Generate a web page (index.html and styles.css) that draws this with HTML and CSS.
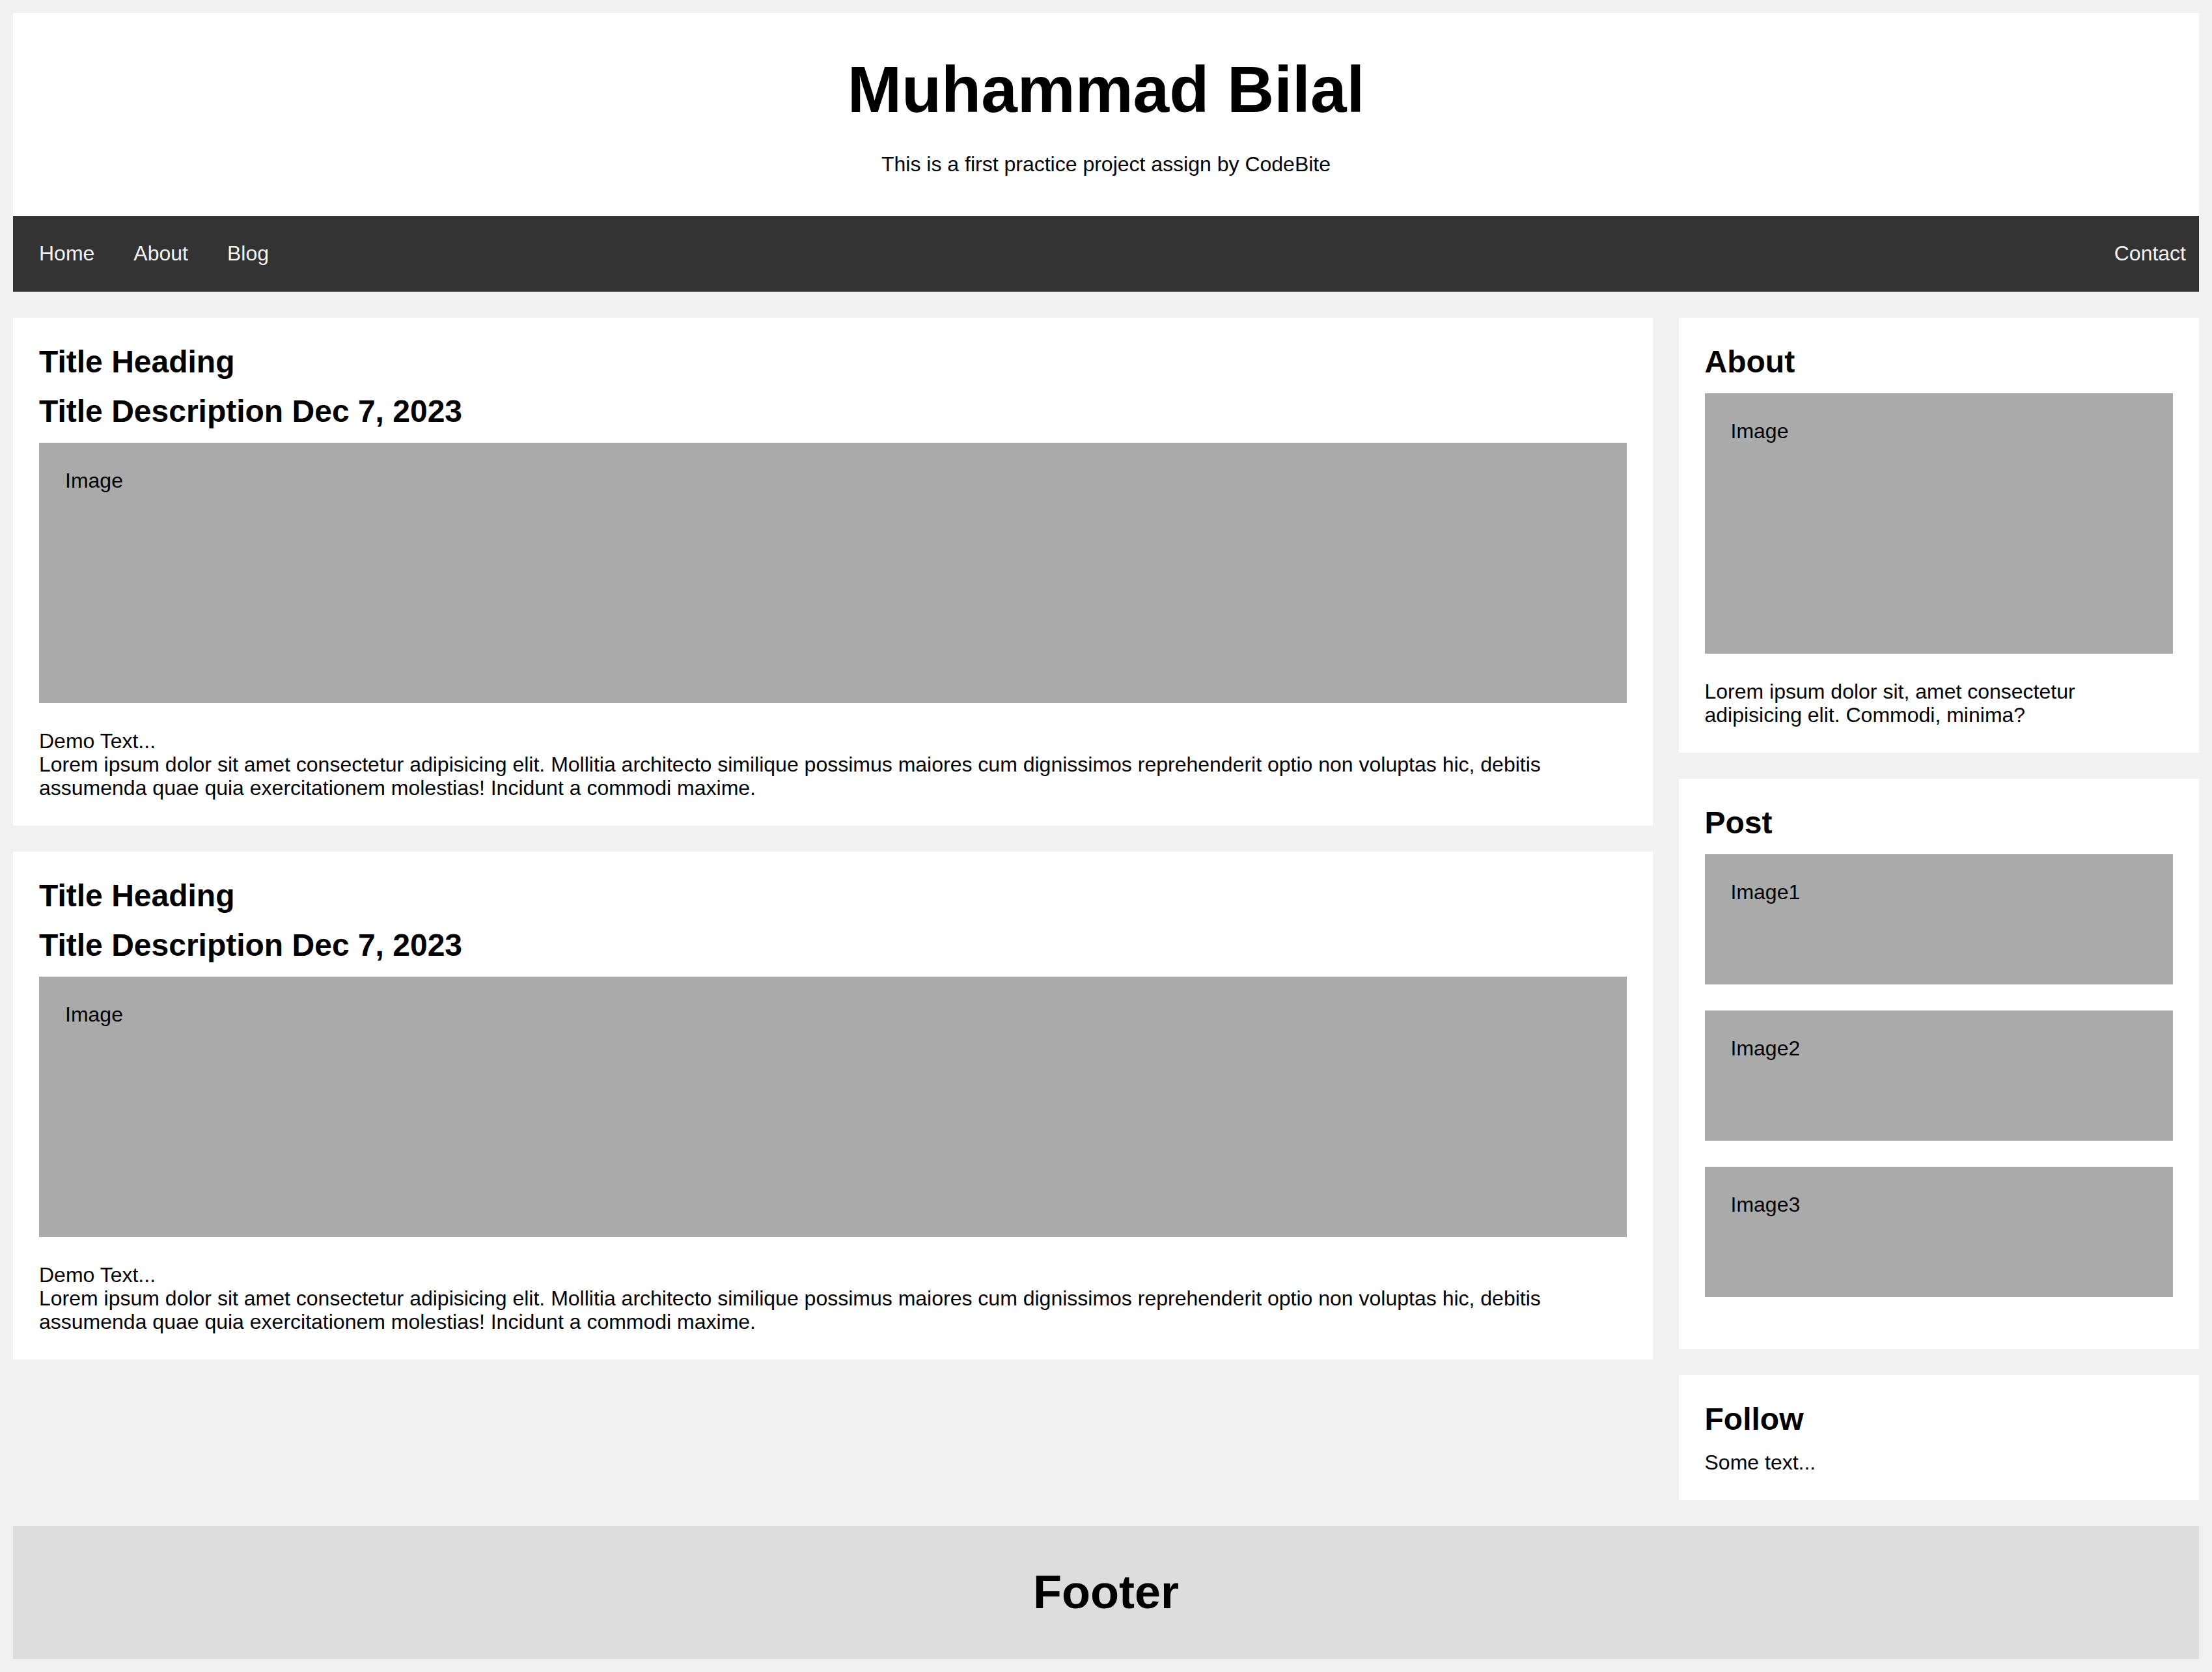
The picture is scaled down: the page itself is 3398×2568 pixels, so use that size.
FILE: index.html
```html
<!DOCTYPE html>
<html lang="en">
<head>
<meta charset="utf-8">
<title>Muhammad Bilal</title>
<link rel="stylesheet" href="styles.css">
</head>
<body>
  <header class="header">
    <h1 class="site-title">Muhammad Bilal</h1>
    <p class="site-sub">This is a first practice project assign by CodeBite</p>
  </header>

  <nav class="topnav">
    <a href="#">Home</a>
    <a href="#">About</a>
    <a href="#">Blog</a>
    <a href="#" class="nav-right">Contact</a>
  </nav>

  <div class="row">
    <main class="leftcolumn">
      <section class="card">
        <h2 class="card-title">Title Heading</h2>
        <h2 class="card-title">Title Description Dec 7, 2023</h2>
        <div class="fakeimg tall">Image</div>
        <p class="text">Demo Text...<br>Lorem ipsum dolor sit amet consectetur adipisicing elit. Mollitia architecto similique possimus maiores cum dignissimos reprehenderit optio non voluptas hic, debitis assumenda quae quia exercitationem molestias! Incidunt a commodi maxime.</p>
      </section>
      <section class="card">
        <h2 class="card-title">Title Heading</h2>
        <h2 class="card-title">Title Description Dec 7, 2023</h2>
        <div class="fakeimg tall">Image</div>
        <p class="text">Demo Text...<br>Lorem ipsum dolor sit amet consectetur adipisicing elit. Mollitia architecto similique possimus maiores cum dignissimos reprehenderit optio non voluptas hic, debitis assumenda quae quia exercitationem molestias! Incidunt a commodi maxime.</p>
      </section>
    </main>

    <aside class="rightcolumn">
      <section class="card">
        <h2 class="card-title">About</h2>
        <div class="fakeimg tall">Image</div>
        <p class="text">Lorem ipsum dolor sit, amet consectetur adipisicing elit. Commodi, minima?</p>
      </section>
      <section class="card">
        <h2 class="card-title">Post</h2>
        <div class="fakeimg short">Image1</div>
        <div class="fakeimg short">Image2</div>
        <div class="fakeimg short">Image3</div>
      </section>
      <section class="card">
        <h2 class="card-title">Follow</h2>
        <p class="text">Some text...</p>
      </section>
    </aside>
  </div>

  <footer class="footer">
    <h2 class="footer-title">Footer</h2>
  </footer>
</body>
</html>
```

FILE: styles.css
```css
* {
  box-sizing: border-box;
}

html, body {
  background: #f1f1f1;
}

body {
  margin: 20px;
  font-family: "Liberation Sans", Arial, sans-serif;
  font-size: 32px;
  line-height: 36px;
  color: #000;
}

.header {
  background: #fff;
  text-align: center;
  padding: 60px 40px 62px;
}

.site-title {
  margin: 0;
  font-size: 100px;
  line-height: 115px;
  font-weight: bold;
}

.site-sub {
  margin: 39px 0 0;
  font-size: 32px;
  line-height: 36px;
}

.topnav {
  background: #333;
  display: flex;
  padding-left: 10px;
}

.topnav a {
  color: #f2f2f2;
  text-decoration: none;
  font-size: 32px;
  line-height: 36px;
  padding: 39px 30px 41px;
}

.topnav .nav-right {
  margin-left: auto;
  padding-right: 20px;
}

.row {
  display: flex;
  align-items: flex-start;
}

.leftcolumn {
  flex: 0 0 75%;
  width: 75%;
}

.rightcolumn {
  flex: 0 0 25%;
  width: 25%;
  padding-left: 40px;
}

.card {
  background: #fff;
  padding: 40px;
  margin-top: 40px;
}

.card-title {
  margin: 0 0 21px;
  font-size: 48px;
  line-height: 55px;
  font-weight: bold;
}

.fakeimg {
  background: #aaa;
  width: 100%;
  padding: 40px;
  margin-bottom: 40px;
}

.fakeimg.tall {
  height: 400px;
}

.fakeimg.short {
  height: 200px;
}

.text {
  margin: 0;
}

.footer {
  background: #ddd;
  text-align: center;
  padding: 60px 40px 61px;
  margin-top: 40px;
}

.footer-title {
  margin: 0;
  font-size: 72px;
  line-height: 83px;
  font-weight: bold;
}
```
